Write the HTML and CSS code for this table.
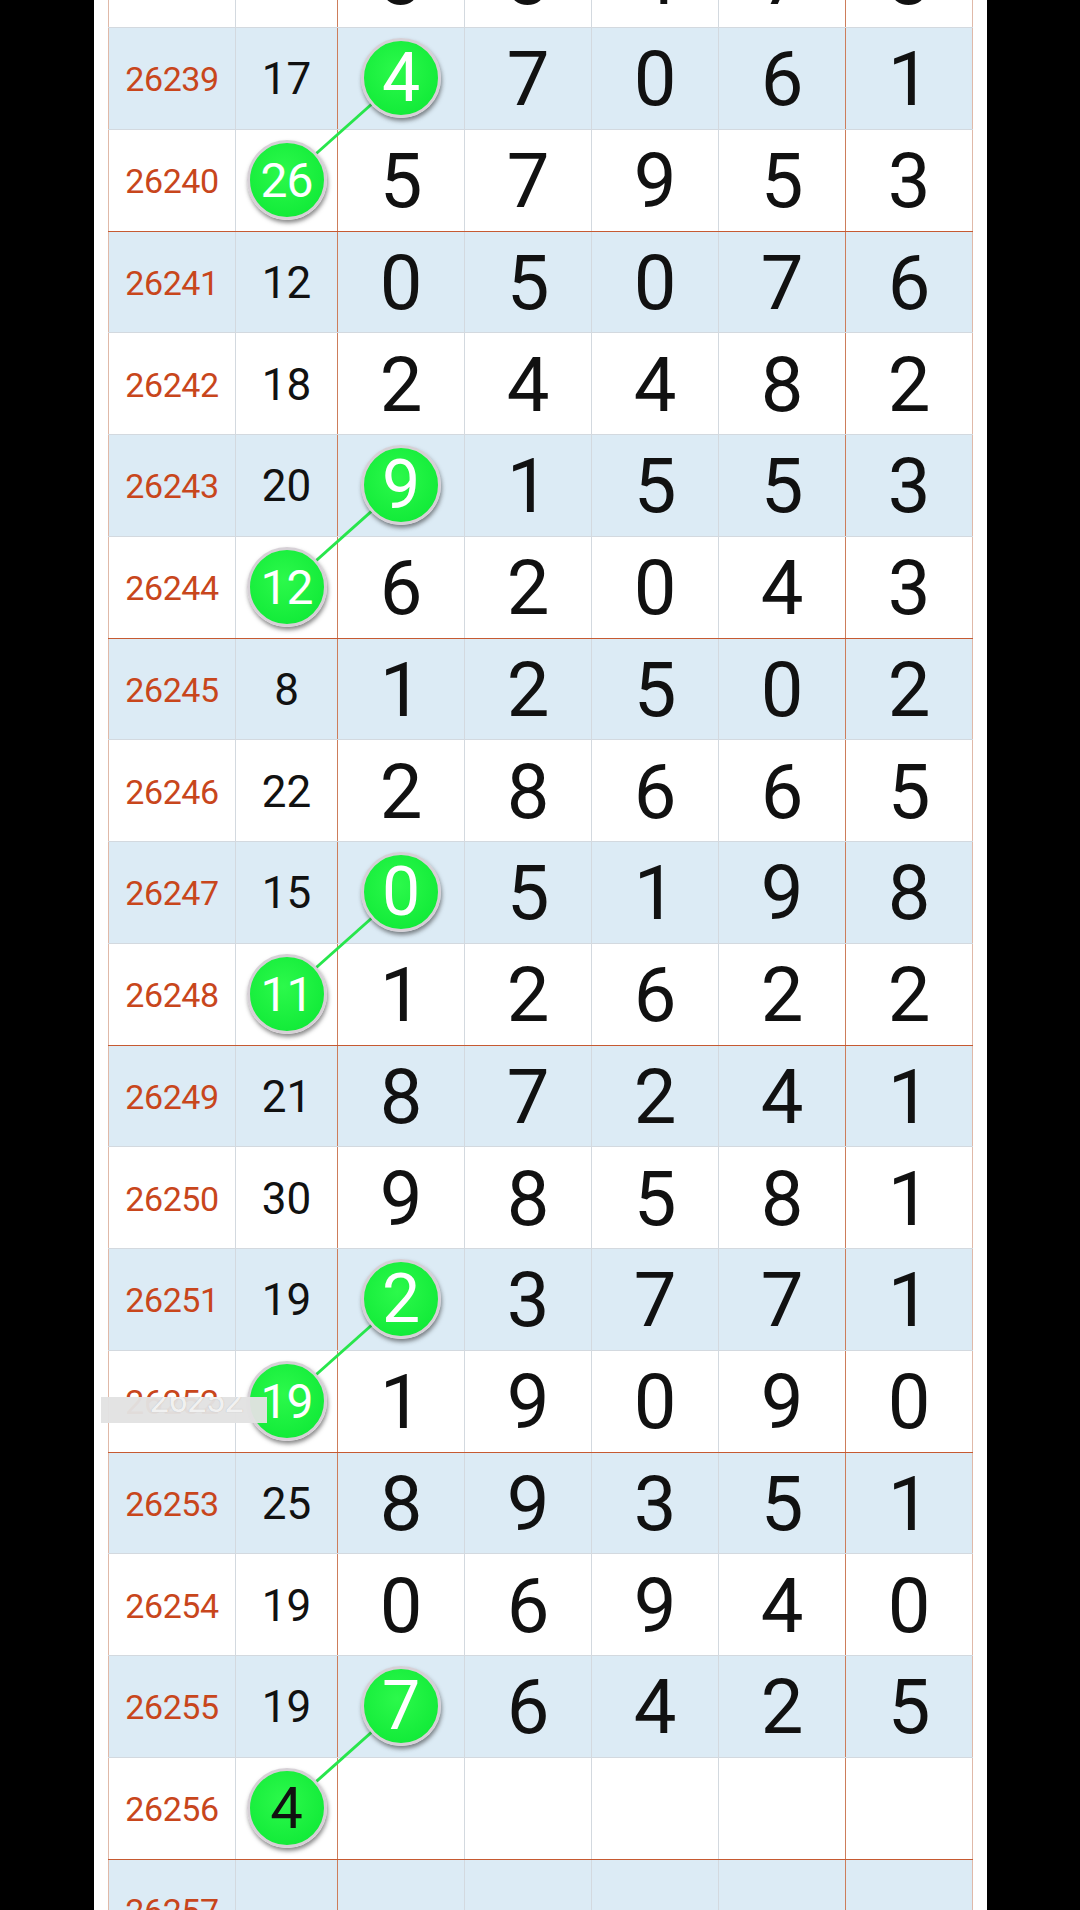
FILE: index.html
```html
<!DOCTYPE html>
<html lang="zh">
<head>
<meta charset="utf-8">
<title>走势图</title>
<link rel="stylesheet" href="styles.css">
</head>
<body>
<div class="panel">
  <div class="table">
    <svg class="links" width="865" height="2035" viewBox="0 0 865 2035">
      <line x1="293" y1="152" x2="178.5" y2="254"/>
      <line x1="293" y1="559" x2="178.5" y2="661"/>
      <line x1="293" y1="966" x2="178.5" y2="1068"/>
      <line x1="293" y1="1373" x2="178.5" y2="1475"/>
      <line x1="293" y1="1780" x2="178.5" y2="1882"/>
    </svg>

    <div class="row white">
      <div class="c id">26238</div><div class="c sum">16</div>
      <div class="c d">3</div><div class="c d">3</div><div class="c d">4</div><div class="c d">7</div><div class="c d">3</div>
    </div>
    <div class="row blue">
      <div class="c id">26239</div><div class="c sum">17</div>
      <div class="c d"><span class="ball one">4</span></div><div class="c d">7</div><div class="c d">0</div><div class="c d">6</div><div class="c d">1</div>
    </div>
    <div class="row white end">
      <div class="c id">26240</div><div class="c sum"><span class="ball two">26</span></div>
      <div class="c d">5</div><div class="c d">7</div><div class="c d">9</div><div class="c d">5</div><div class="c d">3</div>
    </div>
    <div class="row blue">
      <div class="c id">26241</div><div class="c sum">12</div>
      <div class="c d">0</div><div class="c d">5</div><div class="c d">0</div><div class="c d">7</div><div class="c d">6</div>
    </div>
    <div class="row white">
      <div class="c id">26242</div><div class="c sum">18</div>
      <div class="c d">2</div><div class="c d">4</div><div class="c d">4</div><div class="c d">8</div><div class="c d">2</div>
    </div>
    <div class="row blue">
      <div class="c id">26243</div><div class="c sum">20</div>
      <div class="c d"><span class="ball one">9</span></div><div class="c d">1</div><div class="c d">5</div><div class="c d">5</div><div class="c d">3</div>
    </div>
    <div class="row white end">
      <div class="c id">26244</div><div class="c sum"><span class="ball two">12</span></div>
      <div class="c d">6</div><div class="c d">2</div><div class="c d">0</div><div class="c d">4</div><div class="c d">3</div>
    </div>
    <div class="row blue">
      <div class="c id">26245</div><div class="c sum">8</div>
      <div class="c d">1</div><div class="c d">2</div><div class="c d">5</div><div class="c d">0</div><div class="c d">2</div>
    </div>
    <div class="row white">
      <div class="c id">26246</div><div class="c sum">22</div>
      <div class="c d">2</div><div class="c d">8</div><div class="c d">6</div><div class="c d">6</div><div class="c d">5</div>
    </div>
    <div class="row blue">
      <div class="c id">26247</div><div class="c sum">15</div>
      <div class="c d"><span class="ball one">0</span></div><div class="c d">5</div><div class="c d">1</div><div class="c d">9</div><div class="c d">8</div>
    </div>
    <div class="row white end">
      <div class="c id">26248</div><div class="c sum"><span class="ball two">11</span></div>
      <div class="c d">1</div><div class="c d">2</div><div class="c d">6</div><div class="c d">2</div><div class="c d">2</div>
    </div>
    <div class="row blue">
      <div class="c id">26249</div><div class="c sum">21</div>
      <div class="c d">8</div><div class="c d">7</div><div class="c d">2</div><div class="c d">4</div><div class="c d">1</div>
    </div>
    <div class="row white">
      <div class="c id">26250</div><div class="c sum">30</div>
      <div class="c d">9</div><div class="c d">8</div><div class="c d">5</div><div class="c d">8</div><div class="c d">1</div>
    </div>
    <div class="row blue">
      <div class="c id">26251</div><div class="c sum">19</div>
      <div class="c d"><span class="ball one">2</span></div><div class="c d">3</div><div class="c d">7</div><div class="c d">7</div><div class="c d">1</div>
    </div>
    <div class="row white end">
      <div class="c id">26252</div><div class="c sum"><span class="ball two">19</span></div>
      <div class="c d">1</div><div class="c d">9</div><div class="c d">0</div><div class="c d">9</div><div class="c d">0</div>
    </div>
    <div class="row blue">
      <div class="c id">26253</div><div class="c sum">25</div>
      <div class="c d">8</div><div class="c d">9</div><div class="c d">3</div><div class="c d">5</div><div class="c d">1</div>
    </div>
    <div class="row white">
      <div class="c id">26254</div><div class="c sum">19</div>
      <div class="c d">0</div><div class="c d">6</div><div class="c d">9</div><div class="c d">4</div><div class="c d">0</div>
    </div>
    <div class="row blue">
      <div class="c id">26255</div><div class="c sum">19</div>
      <div class="c d"><span class="ball one">7</span></div><div class="c d">6</div><div class="c d">4</div><div class="c d">2</div><div class="c d">5</div>
    </div>
    <div class="row white end">
      <div class="c id">26256</div><div class="c sum"><span class="ball one dark">4</span></div>
      <div class="c d"></div><div class="c d"></div><div class="c d"></div><div class="c d"></div><div class="c d"></div>
    </div>
    <div class="row blue">
      <div class="c id">26257</div><div class="c sum"></div>
      <div class="c d"></div><div class="c d"></div><div class="c d"></div><div class="c d"></div><div class="c d"></div>
    </div>

    <div class="toast"><span class="toast-text">26252</span></div>
  </div>
</div>
</body>
</html>
```

FILE: styles.css
```css
html, body {
  margin: 0;
  padding: 0;
  background: #000;
}

.panel {
  width: 893px;
  height: 1910px;
  margin-left: 94px;
  padding-left: 14px;
  box-sizing: border-box;
  background: #fff;
  overflow: hidden;
}

.table {
  position: relative;
  width: 865px;
  margin-top: -73.75px;
  font-family: Roboto, "Liberation Sans", sans-serif;
}

.links {
  position: absolute;
  left: 0;
  top: 0;
  z-index: 1;
  pointer-events: none;
}

.links line {
  stroke: #28e64c;
  stroke-width: 3;
}

.row {
  display: grid;
  grid-template-columns: 127px 102px 127px 127px 127px 127px 128px;
  height: 101.75px;
  box-sizing: border-box;
  border-bottom: 1px solid #d3d9df;
}

.row.white { background: #fff; }
.row.blue { background: #dcebf5; }
.row.end { border-bottom: 1px solid #c65a32; }

.c {
  display: flex;
  align-items: center;
  justify-content: center;
  border-left: 1px solid #d3d9df;
  color: #111;
  padding-top: 2px;
  box-sizing: border-box;
}

.c:nth-child(1) { border-left-color: #e0b9a8; }
.c:nth-child(3) { border-left-color: #cd7d5b; }
.c:nth-child(7) {
  border-left-color: #cd7d5b;
  border-right: 1px solid #e0b9a8;
}

.id {
  color: #c8461c;
  font-size: 34px;
  letter-spacing: -0.4px;
}

.sum {
  font-size: 44px;
}

.d {
  font-size: 76px;
}

.ball {
  position: relative;
  z-index: 2;
  width: 80px;
  height: 80px;
  box-sizing: border-box;
  border-radius: 50%;
  border: 3px solid #d6d0d6;
  background: radial-gradient(circle at 45% 40%, #2cf94b 0%, #14ec3a 70%, #0fdf36 100%);
  box-shadow: 1px 3px 4px rgba(40, 40, 40, 0.55);
  color: #fff;
  display: flex;
  align-items: center;
  justify-content: center;
  margin-top: -2px;
}

.ball.one { font-size: 68px; }
.ball.two { font-size: 48px; letter-spacing: -1px; }
.ball.dark { color: #111; font-size: 58px; }

.toast {
  position: absolute;
  left: -7px;
  top: 1471px;
  width: 166px;
  height: 26px;
  z-index: 3;
  background: rgba(226, 226, 226, 0.96);
  overflow: hidden;
  text-align: center;
  box-sizing: border-box;
  padding-left: 12px;
}

.toast-text {
  display: block;
  width: 127px;
  margin-left: 20px;
  text-align: center;
  font-size: 34px;
  line-height: 34px;
  margin-top: -14px;
  color: rgba(250, 250, 250, 0.9);
  text-shadow: 0 0 1px rgba(150, 150, 150, 0.6);
  letter-spacing: -0.4px;
}
```
